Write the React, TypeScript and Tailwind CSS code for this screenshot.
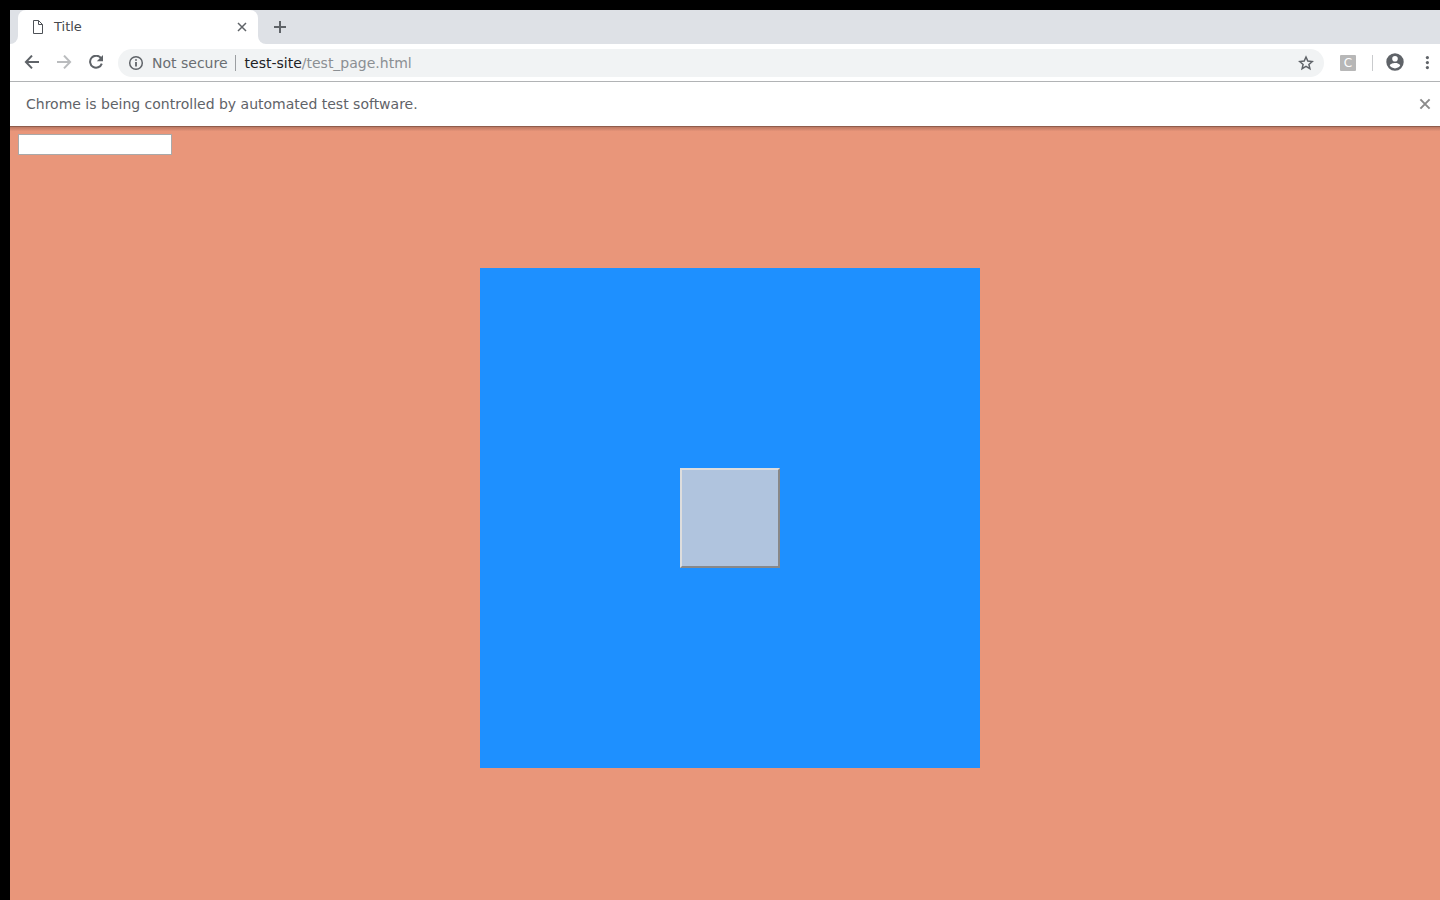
import React from "react";

function Icon({ size, children, className = "" }: { size: number; children: React.ReactNode; className?: string }) {
  return (
    <svg width={size} height={size} viewBox={`0 0 ${size} ${size}`} fill="none" className={`block shrink-0 ${className}`} aria-hidden="true">
      {children}
    </svg>
  );
}

function TabStrip() {
  return (
    <div className="flex h-[34px] bg-white">
      <div className="w-2 rounded-br-lg bg-[#dee1e6]" />
      <div className="w-60 bg-[#dee1e6]">
        <div className="flex h-full items-center rounded-t-lg bg-white pr-2 pl-3">
          <Icon size={16}>
            <path d="M3.5 1.5H8.5L12.5 5.5V14.5H3.5ZM8.5 1.5V5.5H12.5" stroke="#4d5156" strokeWidth="1" />
          </Icon>
          <span className="ml-2 flex-1 text-[13px] leading-4 text-[#45494d]">Title</span>
          <button aria-label="Close tab">
            <Icon size={16}>
              <path d="M4 4L12 12M12 4L4 12" stroke="#5f6368" strokeWidth="1.5" />
            </Icon>
          </button>
        </div>
      </div>
      <div className="flex flex-1 items-center rounded-bl-lg bg-[#dee1e6] pl-3.5">
        <button aria-label="New tab">
          <Icon size={16}>
            <path d="M8 2V14M2 8H14" stroke="#5f6368" strokeWidth="2" />
          </Icon>
        </button>
      </div>
    </div>
  );
}

function Toolbar() {
  return (
    <div className="flex h-[38px] items-center border-b border-[#b1b3b5] bg-white pr-[5px] pl-3.5">
      <div className="flex gap-4">
        <button aria-label="Back">
          <Icon size={16}>
            <path d="M15 7H2.5M8 0.6L1.9 7L8 13.4" stroke="#5f6368" strokeWidth="2" />
          </Icon>
        </button>
        <button aria-label="Forward">
          <Icon size={16}>
            <path d="M1 7H13.5M8 0.6L14.1 7L8 13.4" stroke="#babcbe" strokeWidth="2" />
          </Icon>
        </button>
        <button aria-label="Reload">
          <Icon size={16}>
            <path d="M13 3.2A6 6 0 1 0 13.8 8.6" stroke="#5f6368" strokeWidth="2" />
            <path d="M15 0V6.2H8.8Z" fill="#5f6368" />
          </Icon>
        </button>
      </div>
      <div className="ml-3.5 flex h-7 flex-1 items-center rounded-full bg-[#f1f3f4] px-2.5 text-sm">
        <Icon size={16}>
          <circle cx="8" cy="8" r="6.3" stroke="#5f6368" strokeWidth="1.5" />
          <path d="M8 7V11.6M8 4.2V5.8" stroke="#5f6368" strokeWidth="1.8" />
        </Icon>
        <span className="ml-2 whitespace-nowrap text-[#6a6e72]">Not secure</span>
        <span className="ml-[7px] h-4 w-px bg-[#9b9ea1]" />
        <a href="#page" className="ml-[9px] flex-1 whitespace-nowrap text-[#202124]">
          test-site<span className="text-[#8b8f93]">/test_page.html</span>
        </a>
        <button aria-label="Bookmark">
          <Icon size={16}>
            <path d="M8 2L9.8 6.1L14.2 6.5L10.9 9.4L11.9 13.7L8 11.4L4.1 13.7L5.1 9.4L1.8 6.5L6.2 6.1Z" stroke="#5f6368" strokeWidth="1.5" />
          </Icon>
        </button>
      </div>
      <button aria-label="Extension" className="ml-4 flex size-4 items-center justify-center rounded-[1px] bg-[#b7b7b7] text-xs leading-4 text-white">
        C
      </button>
      <span className="ml-4 h-4 w-px bg-[#c9cbcd]" />
      <button aria-label="Profile" className="ml-3">
        <Icon size={20}>
          <path fillRule="evenodd" clipRule="evenodd" d="M10 0.3A8.7 8.7 0 1 0 10 17.7A8.7 8.7 0 1 0 10 0.3ZM10 3A2.8 2.8 0 1 1 10 8.6A2.8 2.8 0 1 1 10 3ZM10 15.4C7.8 15.4 5.9 14.3 4.8 12.6C4.8 10.9 8.3 10 10 10S15.2 10.9 15.2 12.6C14.1 14.3 12.2 15.4 10 15.4Z" fill="#5f6368" />
        </Icon>
      </button>
      <button aria-label="Menu" className="ml-3.5">
        <Icon size={16}>
          <g fill="#5f6368">
            <circle cx="8.4" cy="2.6" r="1.6" />
            <circle cx="8.4" cy="7.6" r="1.6" />
            <circle cx="8.4" cy="12.6" r="1.6" />
          </g>
        </Icon>
      </button>
    </div>
  );
}

function InfoBar() {
  return (
    <div className="flex h-11 items-center bg-white pr-[7px] pl-4">
      <p className="flex-1 text-sm text-[#5f6368]">Chrome is being controlled by automated test software.</p>
      <button aria-label="Dismiss">
        <Icon size={16}>
          <path d="M3.4 3.4L12.6 12.6M12.6 3.4L3.4 12.6" stroke="#8b8b8b" strokeWidth="2" />
        </Icon>
      </button>
    </div>
  );
}

export default function App() {
  return (
    <div className="flex min-h-screen flex-col bg-black pt-2.5 pl-2.5 font-['DejaVu_Sans',sans-serif]">
      <header>
        <TabStrip />
        <Toolbar />
        <InfoBar />
      </header>
      <main className="flex flex-1 flex-col bg-[#e9967a]">
        <div className="h-px bg-[#8f5c4b]" />
        <div className="h-1 bg-linear-to-b from-[#bc7962] to-[#e59378]" />
        <div className="flex pt-[3px] pl-2">
          <input aria-label="Text" type="text" className="h-[21px] w-[154px] border border-[#a9a9a9] bg-white px-px text-sm outline-none" />
        </div>
        <div className="flex justify-center pt-[113px] pb-8 pl-2.5">
          <div className="flex size-[500px] items-center justify-center bg-[#1e90ff]">
            <button aria-label="Square" className="size-[100px] border-2 border-t-[#dddddd] border-r-[#888888] border-b-[#888888] border-l-[#dddddd] bg-[#b0c4de]" />
          </div>
        </div>
      </main>
    </div>
  );
}
